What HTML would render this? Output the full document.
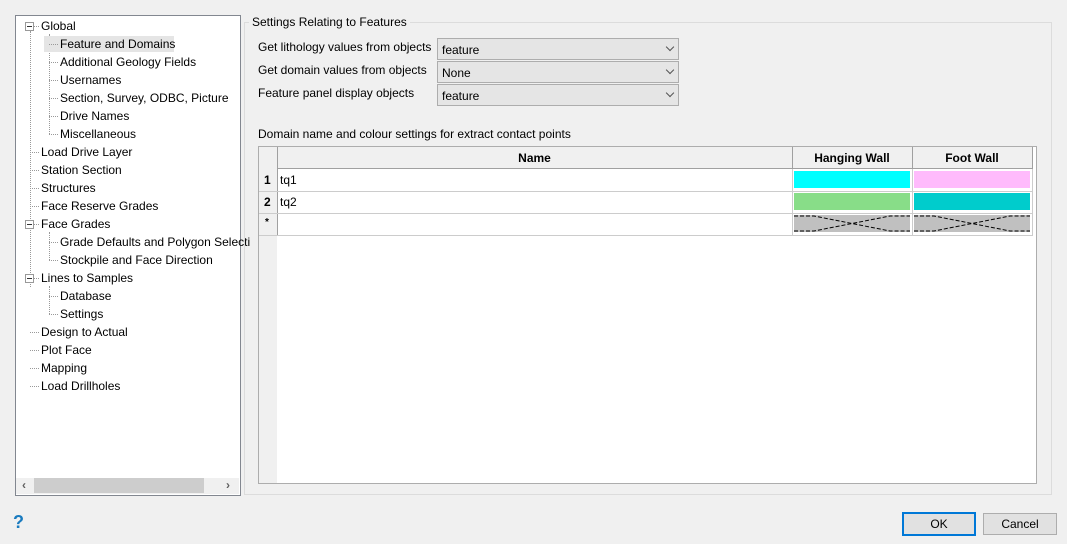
<!DOCTYPE html>
<html><head><style>
body{margin:0;width:1067px;height:544px;background:#f0f0f0;font-family:"Liberation Sans",sans-serif;font-size:12px;color:#000;position:relative;overflow:hidden}
.a{position:absolute}
.tree{left:15px;top:15px;width:224px;height:479px;background:#fff;border:1px solid #828790}
.ti{position:absolute;white-space:nowrap;line-height:16px}
.exp{position:absolute;width:7px;height:7px;border:1px solid #999;background:#fff}
.exp:after{content:"";position:absolute;left:1px;top:3px;width:5px;height:1px;background:#333}
.vl{position:absolute;border-left:1px dotted #999}
.hl{position:absolute;border-top:1px dotted #999;height:0}
.combo{position:absolute;left:437px;width:240px;height:20px;background:#e5e5e5;border:1px solid #adadad}
.combo span{position:absolute;left:4px;top:4px}
.combo i{position:absolute;right:5px;top:5px;width:5px;height:5px;border-right:1px solid #555;border-bottom:1px solid #555;transform:rotate(45deg)}
.lab{position:absolute;left:258px}
.grid{left:258px;top:146px;width:777px;height:336px;background:#f0f0f0;border:1px solid #adadad}
.c{position:absolute;box-sizing:border-box}
.btn{position:absolute;top:513px;width:72px;height:20px;background:#e1e1e1;border:1px solid #adadad;text-align:center;line-height:20px}
</style></head><body>
<div class="a tree">
<div class="vl" style="left:14px;top:15px;height:256px"></div>
<div class="vl" style="left:33px;top:18px;height:100px"></div>
<div class="vl" style="left:33px;top:216px;height:28px"></div>
<div class="vl" style="left:33px;top:270px;height:28px"></div>
</div>
<div class="a" style="left:44px;top:36px;width:130px;height:16px;background:#e5e5e5"></div>
<div id="t"></div>
<script>
var items=[[0,"Global",1],[1,"Feature and Domains"],[1,"Additional Geology Fields"],[1,"Usernames"],[1,"Section, Survey, ODBC, Picture"],[1,"Drive Names"],[1,"Miscellaneous"],[0,"Load Drive Layer"],[0,"Station Section"],[0,"Structures"],[0,"Face Reserve Grades"],[0,"Face Grades",1],[1,"Grade Defaults and Polygon Selecti"],[1,"Stockpile and Face Direction"],[0,"Lines to Samples",1],[1,"Database"],[1,"Settings"],[0,"Design to Actual"],[0,"Plot Face"],[0,"Mapping"],[0,"Load Drillholes"]];
var h="";items.forEach(function(it,i){var y=18+i*18;var x=it[0]?60:41;
h+='<div class="ti" style="left:'+x+'px;top:'+y+'px">'+it[1]+'</div>';
var lx=it[0]?49:30;h+='<div class="hl" style="left:'+lx+'px;top:'+(y+8)+'px;width:'+(x-lx-2)+'px"></div>';
if(it[2])h+='<div class="exp" style="left:25px;top:'+(y+4)+'px"></div>';});
document.getElementById("t").innerHTML=h;
</script>
<div class="a" style="left:16px;top:478px;width:223px;height:16px;background:#f0f0f0"></div>
<div class="a" style="left:34px;top:478px;width:170px;height:15px;background:#cdcdcd"></div>
<div class="a" style="left:22px;top:478px;color:#606060;font-weight:bold">&lsaquo;</div>
<div class="a" style="left:226px;top:478px;color:#606060;font-weight:bold">&rsaquo;</div>
<div class="a" style="left:13px;top:512px;color:#1a7bbf;font-weight:bold;font-size:18px">?</div>

<div class="a" style="left:244px;top:22px;width:806px;height:471px;border:1px solid #dcdcdc"></div>
<div class="a" style="left:249px;top:15px;background:#f0f0f0;padding:0 3px">Settings Relating to Features</div>
<div class="lab" style="top:40px">Get lithology values from objects</div>
<div class="lab" style="top:63px">Get domain values from objects</div>
<div class="lab" style="top:86px">Feature panel display objects</div>
<div class="combo" style="top:38px"><span>feature</span><i></i></div>
<div class="combo" style="top:61px"><span>None</span><i></i></div>
<div class="combo" style="top:84px"><span>feature</span><i></i></div>
<div class="lab" style="top:127px">Domain name and colour settings for extract contact points</div>

<div class="a grid">
<div class="c" style="left:18px;top:0;width:759px;height:336px;background:#fff"></div>
<div class="c" style="left:0;top:0;width:774px;height:22px;background:#f0f0f0;border-bottom:1px solid #a0a0a0"></div>
<div class="c" style="left:0;top:0;width:19px;height:88px;border-right:1px solid #a0a0a0;background:#f0f0f0"></div>
<div class="c" style="left:18px;top:0;width:516px;height:22px;border-right:1px solid #a0a0a0;text-align:center;font-weight:bold;line-height:22px">Name</div>
<div class="c" style="left:533px;top:0;width:121px;height:22px;border-right:1px solid #a0a0a0;text-align:center;font-weight:bold;line-height:22px">Hanging Wall</div>
<div class="c" style="left:653px;top:0;width:121px;height:22px;border-right:1px solid #a0a0a0;text-align:center;font-weight:bold;line-height:22px">Foot Wall</div>
<div class="c" style="left:0;top:44px;width:774px;height:1px;background:#ccc"></div>
<div class="c" style="left:0;top:66px;width:774px;height:1px;background:#ccc"></div>
<div class="c" style="left:0;top:88px;width:774px;height:1px;background:#ccc"></div>
<div class="c" style="left:533px;top:22px;width:1px;height:66px;background:#ccc"></div>
<div class="c" style="left:653px;top:22px;width:1px;height:66px;background:#ccc"></div>
<div class="c" style="left:773px;top:22px;width:1px;height:66px;background:#ccc"></div>
<div class="c" style="left:5px;top:26px;font-weight:bold">1</div>
<div class="c" style="left:5px;top:48px;font-weight:bold">2</div>
<div class="c" style="left:6px;top:70px;font-weight:bold;font-size:10px">*</div>
<div class="c" style="left:21px;top:26px">tq1</div>
<div class="c" style="left:21px;top:48px">tq2</div>
<div class="c" style="left:535px;top:24px;width:116px;height:17px;background:#00ffff"></div>
<div class="c" style="left:655px;top:24px;width:116px;height:17px;background:#ffbbfc"></div>
<div class="c" style="left:535px;top:46px;width:116px;height:17px;background:#88dd88"></div>
<div class="c" style="left:655px;top:46px;width:116px;height:17px;background:#00cccc"></div>
<svg class="c" style="left:535px;top:68px" width="116" height="17"><rect width="116" height="17" fill="#c0c0c0"/><path d="M0 1H20L58 8.5L96 1H116M0 16H20L58 8.5L96 16H116" stroke="#000" fill="none" stroke-dasharray="4 2"/></svg>
<svg class="c" style="left:655px;top:68px" width="116" height="17"><rect width="116" height="17" fill="#c0c0c0"/><path d="M0 1H20L58 8.5L96 1H116M0 16H20L58 8.5L96 16H116" stroke="#000" fill="none" stroke-dasharray="4 2"/></svg>
</div>

<div class="btn" style="left:902px;border:2px solid #0078d7;top:512px;width:70px">OK</div>
<div class="btn" style="left:983px">Cancel</div>
</body></html>
